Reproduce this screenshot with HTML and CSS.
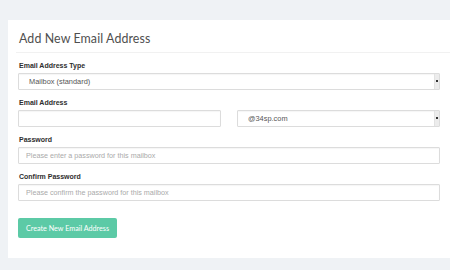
FILE: index.html
```html
<!DOCTYPE html>
<html lang="en">
<head>
    <meta charset="UTF-8">
    <meta name="viewport" content="width=device-width, initial-scale=1.0">
    <title>Add New Email Address</title>
    <link rel="stylesheet" href="styles.css">
</head>
<body>
    <div class="card">
        <div class="card-head">
            <h1>Add New Email Address</h1>
        </div>
        <form class="mail-form">
            <!-- type -->
            <div class="group">
                <label for="type">Email Address Type</label>
                <div class="select-wrap">
                    <select id="type" class="field pick">
                        <option>Mailbox (standard)</option>
                    </select>
                    <span class="stepper"></span>
                </div>
            </div>
            <!-- address + domain -->
            <div class="group">
                <label for="address">Email Address</label>
                <div class="split">
                    <input type="text" id="address" class="field">
                    <div class="select-wrap">
                        <select class="field pick">
                            <option>@34sp.com</option>
                        </select>
                        <span class="stepper"></span>
                    </div>
                </div>
            </div>
            <div class="group">
                <label for="pass">Password</label>
                <input type="password" id="pass" class="field" placeholder="Please enter a password for this mailbox">
            </div>
            <div class="group">
                <label for="pass2">Confirm Password</label>
                <input type="password" id="pass2" class="field" placeholder="Please confirm the password for this mailbox">
            </div>
            <button type="button" class="btn-create">Create New Email Address</button>
        </form>
    </div>
</body>
</html>
```

FILE: styles.css
```css
*{
    box-sizing:border-box;
    margin:0;
    padding:0;
}

body{
    background-color:#eff2f5;
    font-family:'Liberation Sans',Arial,sans-serif;
    overflow:hidden;
}

.card{
    background-color:#fff;
    margin:20px 0 0 8px;
    padding:0 0 20px 10px;
    width:460px;
}

.card-head{
    height:33px;
    margin-left:-2px;
    padding:10px 0 0 3px;
    border-bottom:1px solid #f1f1f1;
}
.card-head h1{
    color:#4f4f4f;
    font-family:'Lato',sans-serif;
    font-size:12.4px;
    font-weight:400;
    line-height:17px;
    letter-spacing:0.1px;
}

.mail-form{
    width:422px;
    padding-top:8px;
}

.group{
    margin-bottom:8px;
}
.group label{
    display:block;
    color:#2e2e2e;
    font-size:7px;
    font-weight:bold;
    line-height:10px;
    margin:0 0 2px 1px;
}

.field{
    display:block;
    width:100%;
    height:17px;
    background:#fff;
    border:1px solid #dcdcdc;
    border-radius:1px;
    box-shadow:inset 0 1px 1px rgba(0,0,0,0.04);
    color:#555;
    font-family:'Liberation Sans',Arial,sans-serif;
    font-size:7.2px;
    padding:0 7px;
    outline:none;
    appearance:none;
    -webkit-appearance:none;
}
.field::placeholder{
    color:#aaa;
}
.pick{
    padding-left:10px;
    font-size:7.4px;
}

.split{
    display:grid;
    grid-template-columns:1fr 1fr;
    column-gap:16px;
}

.select-wrap{
    position:relative;
}
/* the little mac style arrow box on the right */
.stepper{
    position:absolute;
    top:1px;
    right:1px;
    width:5px;
    height:15px;
    background:#ececec;
    border-left:1px solid #e2e2e2;
}
.stepper::after{
    content:"";
    position:absolute;
    left:1px;
    top:6px;
    width:2px;
    height:2px;
    background:#333;
}

.btn-create{
    margin-top:9px;
    width:99px;
    height:20px;
    border:none;
    border-radius:2px;
    background-color:#5ccaa6;
    color:#fff;
    font-family:'Lato',sans-serif;
    font-size:7.2px;
    cursor:pointer;
}
```
